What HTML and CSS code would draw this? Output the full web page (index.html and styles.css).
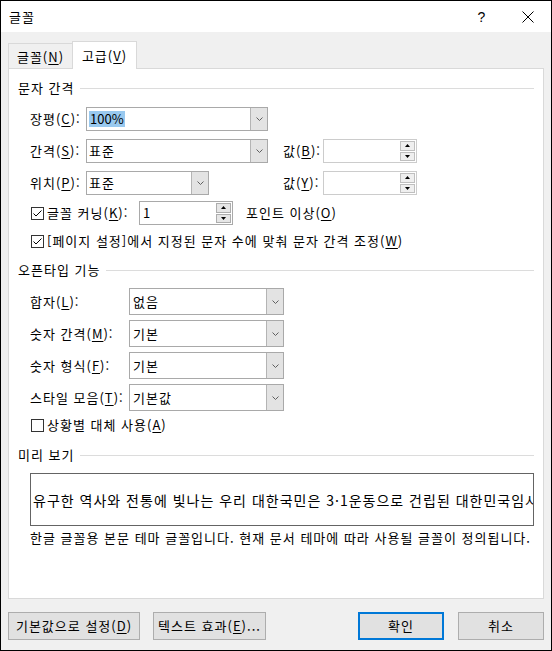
FILE: index.html
```html
<!DOCTYPE html>
<html lang="ko">
<head>
<meta charset="utf-8">
<title>글꼴</title>
<link rel="stylesheet" href="styles.css">
</head>
<body>
<div class="window">
  <div class="titlebar">
    <span class="title">글꼴</span>
    <span class="tb-btn help">?</span>
    <span class="tb-btn close"><svg width="12" height="12" viewBox="0 0 12 12"><path d="M0.5 0.5 L11.5 11.5 M11.5 0.5 L0.5 11.5" stroke="#000" stroke-width="1" fill="none"/></svg></span>
  </div>
  <div class="body">
    <div class="tabs">
      <div class="tab">글꼴(<u>N</u>)</div>
      <div class="tab active">고급(<u>V</u>)</div>
    </div>
    <div class="panel">
      <div class="group-title"><span>문자 간격</span><i class="rule"></i></div>
      <div class="spacing-grid">
        <span class="lbl">장평(<u>C</u>):</span>
        <div class="combo w182"><span class="val"><span class="sel">100%</span></span><span class="arr"><svg width="7" height="4" viewBox="0 0 7 4"><polyline points="0.5,0.5 3.5,3.5 6.5,0.5" fill="none" stroke="#606060"/></svg></span></div>
        <span></span><span></span><span></span>

        <span class="lbl">간격(<u>S</u>):</span>
        <div class="combo w182"><span class="val">표준</span><span class="arr"><svg width="7" height="4" viewBox="0 0 7 4"><polyline points="0.5,0.5 3.5,3.5 6.5,0.5" fill="none" stroke="#606060"/></svg></span></div>
        <span></span>
        <span class="lbl">값(<u>B</u>):</span>
        <div class="spin disabled"><span class="val"></span><span class="sbs"><span class="sb"><svg width="5" height="3" viewBox="0 0 5 3"><polygon points="0,3 2.5,0 5,3" fill="#000"/></svg></span><span class="sb"><svg width="5" height="3" viewBox="0 0 5 3"><polygon points="0,0 2.5,3 5,0" fill="#000"/></svg></span></span></div>

        <span class="lbl">위치(<u>P</u>):</span>
        <div class="combo w123"><span class="val">표준</span><span class="arr"><svg width="7" height="4" viewBox="0 0 7 4"><polyline points="0.5,0.5 3.5,3.5 6.5,0.5" fill="none" stroke="#606060"/></svg></span></div>
        <span></span>
        <span class="lbl">값(<u>Y</u>):</span>
        <div class="spin disabled"><span class="val"></span><span class="sbs"><span class="sb"><svg width="5" height="3" viewBox="0 0 5 3"><polygon points="0,3 2.5,0 5,3" fill="#000"/></svg></span><span class="sb"><svg width="5" height="3" viewBox="0 0 5 3"><polygon points="0,0 2.5,3 5,0" fill="#000"/></svg></span></span></div>
      </div>

      <div class="kern-row">
        <span class="cb checked"><svg width="11" height="11" viewBox="0 0 11 11"><polyline points="1.5,5.5 4,8 9.5,2.5" fill="none" stroke="#000" stroke-width="1"/></svg></span>
        <span class="cb-lbl kern-lbl">글꼴 커닝(<u>K</u>):</span>
        <div class="spin"><span class="val">1</span><span class="sbs"><span class="sb"><svg width="5" height="3" viewBox="0 0 5 3"><polygon points="0,3 2.5,0 5,3" fill="#000"/></svg></span><span class="sb"><svg width="5" height="3" viewBox="0 0 5 3"><polygon points="0,0 2.5,3 5,0" fill="#000"/></svg></span></span></div>
        <span class="pt-lbl">포인트 이상(<u>O</u>)</span>
      </div>

      <div class="cb-row grid-row">
        <span class="cb checked"><svg width="11" height="11" viewBox="0 0 11 11"><polyline points="1.5,5.5 4,8 9.5,2.5" fill="none" stroke="#000" stroke-width="1"/></svg></span>
        <span class="cb-lbl">[페이지 설정]에서 지정된 문자 수에 맞춰 문자 간격 조정(<u>W</u>)</span>
      </div>

      <div class="group-title g2"><span>오픈타입 기능</span><i class="rule"></i></div>
      <div class="ot-grid">
        <span class="lbl">합자(<u>L</u>):</span>
        <div class="combo tall"><span class="val">없음</span><span class="arr"><svg width="7" height="4" viewBox="0 0 7 4"><polyline points="0.5,0.5 3.5,3.5 6.5,0.5" fill="none" stroke="#606060"/></svg></span></div>
        <span class="lbl">숫자 간격(<u>M</u>):</span>
        <div class="combo tall"><span class="val">기본</span><span class="arr"><svg width="7" height="4" viewBox="0 0 7 4"><polyline points="0.5,0.5 3.5,3.5 6.5,0.5" fill="none" stroke="#606060"/></svg></span></div>
        <span class="lbl">숫자 형식(<u>F</u>):</span>
        <div class="combo tall"><span class="val">기본</span><span class="arr"><svg width="7" height="4" viewBox="0 0 7 4"><polyline points="0.5,0.5 3.5,3.5 6.5,0.5" fill="none" stroke="#606060"/></svg></span></div>
        <span class="lbl">스타일 모음(<u>T</u>):</span>
        <div class="combo tall"><span class="val">기본값</span><span class="arr"><svg width="7" height="4" viewBox="0 0 7 4"><polyline points="0.5,0.5 3.5,3.5 6.5,0.5" fill="none" stroke="#606060"/></svg></span></div>
      </div>

      <div class="cb-row ctx-row">
        <span class="cb"></span>
        <span class="cb-lbl">상황별 대체 사용(<u>A</u>)</span>
      </div>

      <div class="group-title g3"><span>미리 보기</span><i class="rule"></i></div>
      <div class="preview"><span>유구한 역사와 전통에 빛나는 우리 대한국민은 3·1운동으로 건립된 대한민국임시</span></div>
      <div class="note">한글 글꼴용 본문 테마 글꼴입니다. 현재 문서 테마에 따라 사용될 글꼴이 정의됩니다.</div>
    </div>
    <div class="buttons">
      <button class="btn b-default">기본값으로 설정(<u>D</u>)</button>
      <button class="btn b-effect">텍스트 효과(<u>E</u>)...</button>
      <span class="spacer"></span>
      <button class="btn b-ok">확인</button>
      <button class="btn b-cancel">취소</button>
    </div>
  </div>
</div>
</body>
</html>
```
FILE: styles.css
```css
* { box-sizing: border-box; }
html, body { margin: 0; padding: 0; }
body {
  font-family: "Noto Sans CJK KR", "Malgun Gothic", sans-serif;
  font-size: 13px;
  letter-spacing: 1px;
  color: #000;
  background: #fff;
}
u { text-decoration: underline; text-underline-offset: 2px; text-decoration-thickness: 1px; }

.window {
  width: 552px;
  height: 651px;
  border: 1px solid #000;
  background: #f0f0f0;
  display: flex;
  flex-direction: column;
  overflow: hidden;
}

.titlebar {
  flex: none;
  height: 31px;
  background: #fff;
  display: flex;
  align-items: center;
  padding-left: 8px;
  line-height: 16px;
}
.title { flex: 1; }
.tb-btn {
  width: 46px;
  height: 31px;
  display: flex;
  align-items: center;
  justify-content: center;
}
.help { font-size: 14px; font-family: "Liberation Sans", sans-serif; }

.body {
  flex: 1;
  display: flex;
  flex-direction: column;
  padding: 9px 7px 0 7px;
}

.tabs {
  display: flex;
  align-items: flex-end;
  height: 27px;
  line-height: 16px;
}
.tab {
  height: 25px;
  width: 64px;
  border: 1px solid #d9d9d9;
  border-bottom: none;
  border-right: none;
  background: #f0f0f0;
  display: flex;
  align-items: center;
  justify-content: center;
  padding-top: 1px;
}
.tab.active {
  height: 28px;
  width: 65px;
  background: #fff;
  border-right: 1px solid #d9d9d9;
  margin-bottom: -1px;
  position: relative;
  z-index: 1;
  padding-top: 0;
}

.panel {
  height: 531px;
  background: #fff;
  border: 1px solid #d9d9d9;
  display: flex;
  flex-direction: column;
  line-height: 16px;
}

.group-title {
  display: flex;
  align-items: center;
  height: 16px;
  margin-top: 11px;
  padding: 0 9px;
}
.group-title .rule {
  flex: 1;
  height: 1px;
  background: #dcdcdc;
  margin-left: 6px;
}
.g2 { margin-top: 11px; }
.g3 { margin-top: 12px; }

.spacing-grid {
  display: grid;
  grid-template-columns: 56px 182px 15px 40px 94px;
  grid-auto-rows: 24px;
  row-gap: 8px;
  align-items: center;
  margin-top: 11px;
  padding-left: 21px;
}
.lbl { white-space: nowrap; }

.combo {
  display: flex;
  height: 24px;
  border: 1px solid #a9a9a9;
  background: #fff;
}
.combo.w182 { width: 182px; }
.combo.w123 { width: 123px; }
.combo .val {
  flex: 1;
  display: flex;
  align-items: center;
  padding-left: 2px;
  white-space: nowrap;
}
.combo .arr {
  width: 17px;
  background: #e3e3e3;
  border-left: 1px solid #b4b4b4;
  display: flex;
  align-items: center;
  justify-content: center;
}
.sel { background: #99c9ef; padding: 0 1px; letter-spacing: 0; }

.spin {
  display: flex;
  width: 94px;
  height: 24px;
  border: 1px solid #a9a9a9;
  background: #fff;
}
.spin.disabled { border-color: #cccccc; }
.spin .val {
  flex: 1;
  display: flex;
  align-items: center;
  padding-left: 3px;
}
.sbs {
  width: 15px;
  margin: 1px 1px 1px 0;
  display: flex;
  flex-direction: column;
  gap: 1px;
}
.sb {
  flex: 1;
  border: 1px solid #adadad;
  background: #e6e6e6;
  display: flex;
  align-items: center;
  justify-content: center;
}
.spin.disabled .sb { border-color: #bfbfbf; background: #efefef; }

.kern-row {
  display: flex;
  align-items: center;
  height: 24px;
  margin-top: 6px;
  padding-left: 22px;
}
.cb {
  width: 13px;
  height: 13px;
  border: 1px solid #333;
  background: #fff;
  display: flex;
  align-items: center;
  justify-content: center;
  flex: none;
}
.cb-lbl { margin-left: 3px; white-space: nowrap; }
.kern-lbl { width: 92px; }
.pt-lbl { margin-left: 13px; }

.cb-row {
  display: flex;
  align-items: center;
  height: 20px;
  padding-left: 22px;
}
.grid-row { margin-top: 6px; }
.ctx-row { margin-top: 4px; }

.ot-grid {
  display: grid;
  grid-template-columns: 99px 155px;
  grid-auto-rows: 27px;
  row-gap: 5px;
  align-items: center;
  margin-top: 10px;
  padding-left: 21px;
}
.combo.tall { height: 27px; width: 155px; }
.combo.tall .val { padding-left: 3px; }

.preview {
  margin: 10px 9px 0 21px;
  height: 53px;
  border: 1px solid #646464;
  display: flex;
  align-items: center;
  overflow: hidden;
  white-space: nowrap;
  padding-left: 2px;
  font-size: 14px;
  line-height: 18px;
}
.note {
  margin-top: 4px;
  height: 16px;
  padding-left: 21px;
  white-space: nowrap;
}

.buttons {
  display: flex;
  margin-top: 13px;
  height: 28px;
}
.btn {
  font: inherit;
  letter-spacing: 1px;
  color: #000;
  background: #e1e1e1;
  border: 1px solid #adadad;
  height: 28px;
  padding: 0;
  line-height: 16px;
}
.b-default { width: 132px; }
.b-effect { width: 113px; margin-left: 13px; }
.spacer { flex: 1; }
.b-ok { width: 86px; border: 2px solid #0078d7; }
.b-cancel { width: 86px; margin-left: 14px; }
```
